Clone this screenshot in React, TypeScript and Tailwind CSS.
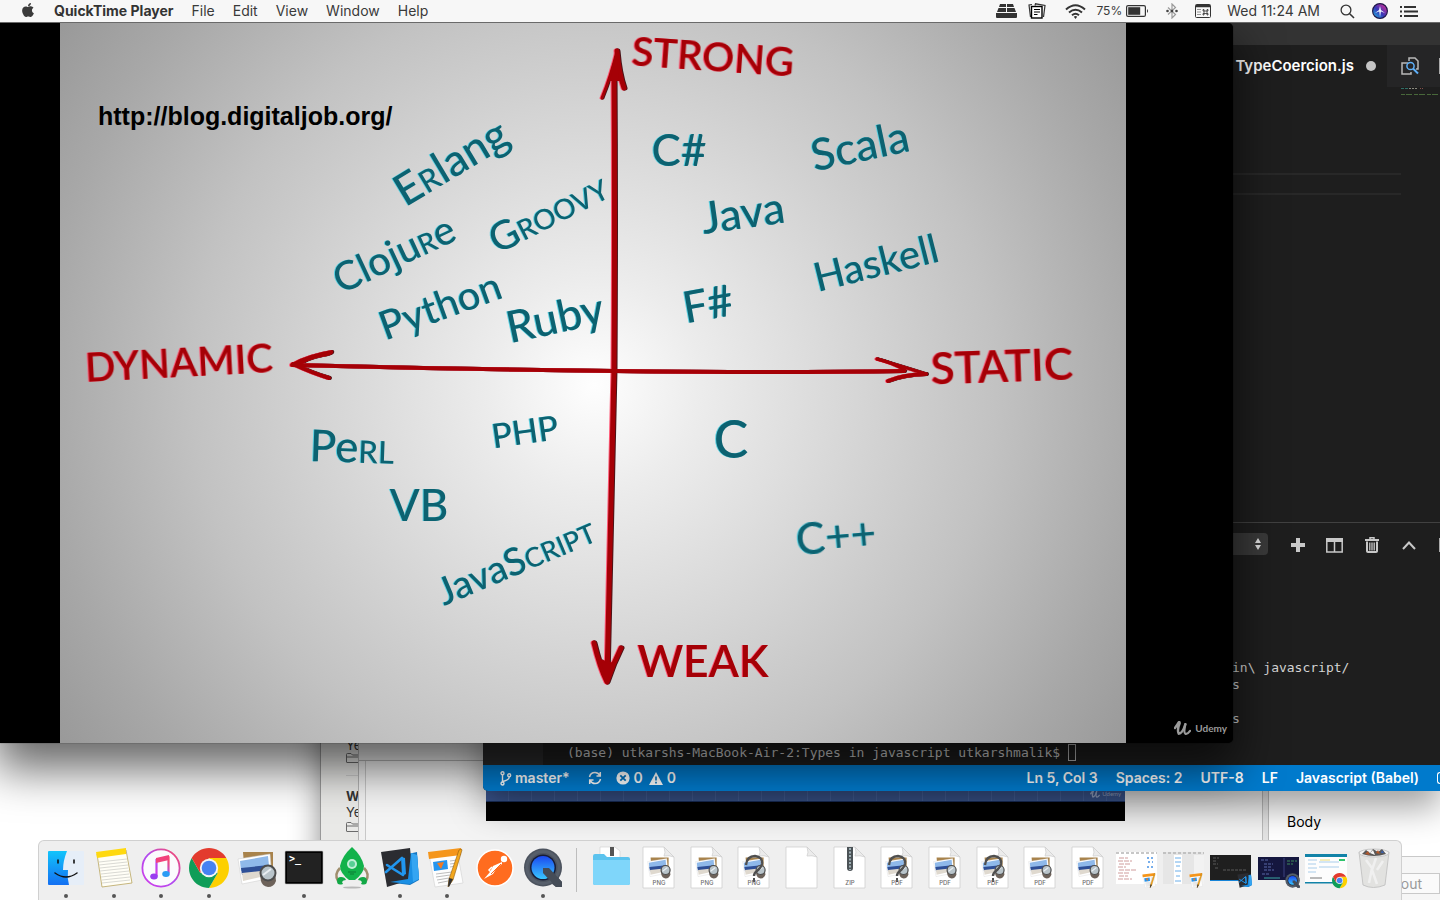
import type { ReactNode } from "react";
import { FaApple } from "react-icons/fa";

/* ---------- Whiteboard drawing ---------- */

type Word = {
  x: number;
  y: number;
  angle: number;
  size: string;
  parts: [string, boolean?][];
};

const languages: Word[] = [
  { x: 451, y: 162, angle: -31, size: "text-[44px]", parts: [["E"], ["r", true], ["lang"]] },
  { x: 394, y: 254, angle: -25, size: "text-[40px]", parts: [["Cloju"], ["r", true], ["e"]] },
  { x: 548, y: 213, angle: -27, size: "text-[40px]", parts: [["Groovy", true]] },
  { x: 440, y: 306, angle: -20, size: "text-[40px]", parts: [["Python"]] },
  { x: 555, y: 318, angle: -12, size: "text-[44px]", parts: [["Ruby"]] },
  { x: 679, y: 151, angle: 0, size: "text-[44px]", parts: [["C#"]] },
  { x: 743, y: 213, angle: -8, size: "text-[44px]", parts: [["Java"]] },
  { x: 860, y: 146, angle: -12, size: "text-[44px]", parts: [["Scala"]] },
  { x: 708, y: 304, angle: -10, size: "text-[44px]", parts: [["F#"]] },
  { x: 876, y: 263, angle: -14, size: "text-[40px]", parts: [["Haskell"]] },
  { x: 352, y: 447, angle: 2, size: "text-[44px]", parts: [["Pe"], ["rl", true]] },
  { x: 525, y: 432, angle: -8, size: "text-[34px]", parts: [["PHP"]] },
  { x: 419, y: 506, angle: 0, size: "text-[44px]", parts: [["VB"]] },
  { x: 516, y: 561, angle: -23, size: "text-[38px]", parts: [["JavaS"], ["cript", true]] },
  { x: 731, y: 440, angle: 0, size: "text-[52px]", parts: [["C"]] },
  { x: 836, y: 537, angle: -5, size: "text-[44px]", parts: [["C++"]] },
];

const axes: Word[] = [
  { x: 713, y: 57, angle: 4, size: "text-[40px]", parts: [["STRONG"]] },
  { x: 179, y: 363, angle: -3, size: "text-[40px]", parts: [["DYNAMIC"]] },
  { x: 1002, y: 367, angle: -2, size: "text-[44px]", parts: [["STATIC"]] },
  { x: 703, y: 662, angle: 0, size: "text-[44px]", parts: [["WEAK"]] },
];

function Lettering({ word }: { word: Word }) {
  return (
    <text
      transform={`translate(${word.x} ${word.y}) rotate(${word.angle})`}
      textAnchor="middle"
      dy="0.35em"
      className={word.size}
    >
      {word.parts.map(([t, caps], i) => (
        <tspan key={i} className={caps ? "[font-variant:small-caps]" : undefined}>
          {t}
        </tspan>
      ))}
    </text>
  );
}

function Whiteboard() {
  return (
    <svg viewBox="60 23 1066 720" className="block w-full" role="img" aria-label="Typing of programming languages">
      <defs>
        <radialGradient id="board" gradientUnits="userSpaceOnUse" cx="594" cy="385" r="670">
          <stop offset="0" stopColor="#fefefe" />
          <stop offset="0.16" stopColor="#ececec" />
          <stop offset="0.35" stopColor="#dadada" />
          <stop offset="0.6" stopColor="#c2c2c2" />
          <stop offset="0.82" stopColor="#a8a8a8" />
          <stop offset="1" stopColor="#959595" />
        </radialGradient>
      </defs>
      <rect x="60" y="23" width="1066" height="720" fill="url(#board)" />
      <a href="http://blog.digitaljob.org/">
        <text x="98" y="125" className="fill-black font-['Liberation_Sans',sans-serif] text-[25px] font-bold">
          http://blog.digitaljob.org/
        </text>
      </a>
      <g
        fill="none"
        stroke="#a50006"
        strokeLinecap="round"
        strokeLinejoin="round"
        className="[filter:drop-shadow(-1px_0_0_#ff5a78)_drop-shadow(1px_0_0_#4a1418)]"
      >
        <path d="M614 70 Q615 220 614 370 Q611 520 607 680" strokeWidth="5" />
        <path d="M602 98 Q611 76 617 51" strokeWidth="3" />
        <path d="M617 51 Q619 74 624 88" strokeWidth="5" />
        <path d="M609 80 L617 52 L620 80Z" fill="#a50006" strokeWidth="2" />
        <path d="M594 643 Q600 668 607 682 Q613 664 621 648" strokeWidth="5" />
        <path d="M599 660 L607 683 L614 664Z" fill="#a50006" strokeWidth="2" />
        <path d="M292 365 Q450 369 614 371 Q780 373 904 371" strokeWidth="4" />
        <path d="M292 364 Q308 355 332 351 Q334 354 322 356 Q306 359 298 366 Z" fill="#a50006" strokeWidth="2" />
        <path d="M293 364 Q312 373 329 378" strokeWidth="4" />
        <path d="M877 359 Q890 362 905 370" strokeWidth="3" />
        <path d="M877 359 Q904 367 926 374" strokeWidth="3" />
        <path d="M888 381 Q902 375 926 374" strokeWidth="4" />
      </g>
      <g className="fill-[#a50006] font-['Lato',sans-serif] font-semibold [filter:drop-shadow(-1px_0_0_#ff5a78)]">
        {axes.map((w, i) => (
          <Lettering key={i} word={w} />
        ))}
      </g>
      <g className="fill-[#0c6271] font-['Lato',sans-serif] font-medium [filter:drop-shadow(-1px_0_0_#5fd2e2)]">
        {languages.map((w, i) => (
          <Lettering key={i} word={w} />
        ))}
      </g>
    </svg>
  );
}

function UdemyMark({ className }: { className: string }) {
  return (
    <svg viewBox="0 0 18 15" className={className} fill="none" stroke="currentColor" strokeLinecap="round" strokeLinejoin="round">
      <path d="M1 7 Q4 3 5 1 Q6 0 6 2 Q3 9 5 13 Q9 13 12 3" strokeWidth="2.6" />
      <path d="M12 3 Q10 12 12 13 Q14 14 17 10" strokeWidth="2.4" />
    </svg>
  );
}

/* ---------- Menu bar ---------- */

function MenuBar() {
  return (
    <header className="relative z-50 flex h-[23px] shrink-0 items-center border-b border-[#6a6a6a] bg-[#f7f7f7] font-['Inter',sans-serif] text-sm leading-none text-[#3a3a3a]">
      <nav className="flex h-full items-center gap-[18px]">
        <button aria-label="Apple" className="ml-5">
          <FaApple className="h-4 w-4 -translate-y-px" />
        </button>
        <button className="font-bold text-[#333]">QuickTime Player</button>
        <button>File</button>
        <button>Edit</button>
        <button>View</button>
        <button>Window</button>
        <button>Help</button>
      </nav>
      <div className="ml-auto flex h-full items-center pr-[22px]">
        <svg viewBox="0 0 21 14" className="h-[14px] w-[21px]" fill="#333" aria-label="Stacks">
          <path d="M4 0h6v3H3zM11 0h6l1 3h-7zM2.500 4H10v4H1zM11 4h7.500L20 8h-9zM0 9h21v4q0 1-1 1H1q-1 0-1-1z" />
        </svg>
        <svg viewBox="0 0 18 16" className="ml-[11px] h-4 w-[18px]" fill="none" aria-label="Clipboard">
          <path d="M2.500 14 L1 2 L4 1.500M7 2.500 7.500 .8 17 2.500 15.500 14" stroke="#333" strokeWidth="1.200" />
          <rect x="3.500" y="3.500" width="10.500" height="11.500" fill="#fff" stroke="#000" strokeWidth="1.400" />
          <path d="M6 6.500h6M6 9h6M6 11.500h3.500" stroke="#000" strokeWidth="1.200" />
        </svg>
        <svg viewBox="0 0 21 15" className="ml-[19px] h-[15px] w-[21px]" fill="none" stroke="#333" strokeWidth="2" aria-label="Wi-Fi">
          <path d="M1 5.500Q10.500-3 20 5.500M4 8.500q6.500-5.500 13 0M7 11.300q3.500-3 7 0" />
          <path d="M8.800 12.800q1.700-1.400 3.400 0L10.500 15z" fill="#333" stroke="none" />
        </svg>
        <span className="ml-2.5 text-xs">75%</span>
        <svg viewBox="0 0 23 12" className="ml-1 h-3 w-[23px]" aria-label="Battery">
          <rect x=".6" y=".6" width="18.800" height="10.800" rx="1.500" fill="none" stroke="#333" strokeWidth="1.200" />
          <rect x="2.200" y="2.200" width="12" height="7.600" fill="#333" />
          <path d="M21 4q2 2 0 4z" fill="#333" />
        </svg>
        <svg viewBox="0 0 12 16" className="ml-[17px] h-4 w-3" fill="none" stroke="#9a9a9a" strokeWidth="1.200" aria-label="Bluetooth">
          <path d="M2 4.500 9.500 11.500 6 15V1l3.500 3.500L2 11.500" />
          <g fill="#444" stroke="none">
            <circle cx="1.500" cy="8" r="1.300" />
            <circle cx="6" cy="8" r="1.300" />
            <circle cx="10.500" cy="8" r="1.300" />
          </g>
        </svg>
        <svg viewBox="0 0 16 14" className="ml-[17px] h-[14px] w-4" fill="none" stroke="#333" aria-label="Input">
          <rect x=".5" y=".5" width="15" height="13" rx="1" />
          <path d="M1 2h14" strokeWidth="2.500" />
          <path d="M2.500 5.500h4M2.500 8h4M2.500 10.500h4" strokeDasharray="1 1" strokeWidth="1" />
          <path d="M9 7V5.500h-1V7h5V5.500h-1V11h1V9.500H8V11h1z" strokeWidth=".8" />
        </svg>
        <span className="ml-4">Wed 11:24 AM</span>
        <button aria-label="Search" className="ml-5">
          <svg viewBox="0 0 15 15" className="h-[15px] w-[15px]" fill="none" stroke="#333" strokeWidth="1.300">
            <circle cx="6" cy="6" r="4.900" />
            <path d="M9.700 9.700 14 14" strokeWidth="1.600" />
          </svg>
        </button>
        <button aria-label="Siri" className="ml-[17px]">
          <svg viewBox="0 0 16 16" className="h-4 w-4">
            <defs>
              <linearGradient id="siri" x1="0" y1="1" x2="1" y2="0">
                <stop offset="0" stopColor="#1ec8e8" />
                <stop offset=".45" stopColor="#3538b8" />
                <stop offset="1" stopColor="#f02a90" />
              </linearGradient>
            </defs>
            <circle cx="8" cy="8" r="7.400" fill="url(#siri)" stroke="#20184a" strokeWidth="1.200" />
            <path d="M8 3l1 4 4 3-4-1.500L8 14 7.200 8.500 3 10l4-3z" fill="#e8f4ff" />
          </svg>
        </button>
        <button aria-label="Notification Center" className="ml-3">
          <svg viewBox="0 0 18 11" className="h-[11px] w-[18px]" fill="#333">
            <path d="M0 0h2v2H0zM0 4.500h2v2H0zM0 9h2v2H0zM4 0h12v2H4zM4 4.500h14v2H4zM4 9h14v2H4z" />
          </svg>
        </button>
      </div>
    </header>
  );
}

/* ---------- Windows ---------- */

function FolderOutline() {
  return (
    <svg viewBox="0 0 14 10" className="h-2.5 w-3.5 shrink-0" fill="none" stroke="#6b6b6b">
      <path d="M.5 9V1.500q0-1 1-1H5l1.500 1.500H13q.5 0 .5 1V9q0 .5-.5.5H1Q.5 9.500.5 9zM.5 4h13" />
    </svg>
  );
}

function NotesWindow() {
  return (
    <section
      aria-label="Notes"
      className="absolute bottom-0 left-[320px] top-[677px] flex w-[60px] flex-col border-l border-[#999] bg-[#e9e9e7] pl-[25px] pt-[37px] font-['Inter',sans-serif] text-[13px] leading-4 text-[#333] shadow-[0_10px_30px_rgba(0,0,0,0.45)]"
    >
      <p>Ye</p>
      <FolderOutline />
      <hr className="mt-3 border-[#cfcfcf]" />
      <p className="mt-3 font-bold">W</p>
      <p>Ye</p>
      <div className="mt-0.5">
        <FolderOutline />
      </div>
    </section>
  );
}

function PagesWindow() {
  return (
    <section aria-label="Pages" className="absolute bottom-0 left-[358px] right-0 top-[677px] flex flex-col border-l border-[#b5b5b5] bg-[#f4f4f4]">
      <div className="h-[61px] shrink-0 border-b border-[#b8b8b8] bg-[#ececec]" />
      <div className="flex flex-1">
        <div className="w-[7px] border-r border-[#c8c8c8] bg-[#f1f1f1]" />
        <figure className="ml-[120px] flex w-[639px] flex-col self-start">
          <div className="flex h-10 items-end justify-end gap-0.5 bg-[#3d5a96] bg-[repeating-linear-gradient(90deg,transparent_0_22px,#4a67a3_22px_23px)] pb-[3px] pr-1 font-['Lato',sans-serif] text-[6px] leading-[8px] text-[#9fb0d3]">
            <UdemyMark className="h-2 w-2.5" />
            Udemy
          </div>
          <div className="h-5 border-t border-[#1b3160] bg-black" />
        </figure>
        <div className="ml-auto w-[7px] border-x border-[#bbb] bg-[#e4e4e4]" />
        <aside className="flex w-[171px] flex-col bg-white font-['Inter',sans-serif] text-sm text-black">
          <p className="border-b border-[#c9c9c9] pb-6 pl-[18px] pt-[51px] leading-5">Body</p>
          <div className="flex flex-1 items-start justify-end bg-[#f6f6f6] pt-4">
            <button className="flex h-[21px] w-[100px] items-center justify-end border border-[#c9c9c9] bg-[#fafafa] pr-[17px] text-sm text-[#999]">
              Layout
            </button>
          </div>
        </aside>
      </div>
    </section>
  );
}

function TerminalHeader() {
  return (
    <div className="flex h-[44px] items-center justify-end text-[#c8c8c8]">
      <div className="relative">
        <select aria-label="Terminal" className="h-[22px] w-[60px] appearance-none rounded-[4px] bg-[#3a3a3a]">
          <option value="" aria-label="bash" />
        </select>
        <svg viewBox="0 0 6 12" className="pointer-events-none absolute right-[7px] top-[5px] h-3 w-1.5" fill="#ddd">
          <path d="M3 0 6 5H0zM0 7h6L3 12z" />
        </svg>
      </div>
      <button aria-label="New terminal" className="ml-[23px]">
        <svg viewBox="0 0 14 14" className="h-3.5 w-3.5" fill="currentColor">
          <path d="M5 0h4v5h5v4H9v5H5V9H0V5h5z" />
        </svg>
      </button>
      <button aria-label="Split terminal" className="ml-[21px]">
        <svg viewBox="0 0 17 15" className="h-[15px] w-[17px]" fill="none" stroke="currentColor">
          <path d="M.8 3v11h15.400V3M8.500 3v11" strokeWidth="1.500" />
          <path d="M0 2h17" strokeWidth="4" />
        </svg>
      </button>
      <button aria-label="Kill terminal" className="ml-[22px]">
        <svg viewBox="0 0 14 16" className="h-4 w-3.5" fill="none" stroke="currentColor">
          <path d="M0 3h14" strokeWidth="2" />
          <path d="M5 2V.8h4V2" strokeWidth="1.500" />
          <path d="M2 4.500v9.700q0 .8 1 .8h8q1 0 1-.8V4.500" strokeWidth="2" />
          <path d="M4.800 5.500v8M7 5.500v8M9.200 5.500v8" strokeWidth="1.300" />
        </svg>
      </button>
      <button aria-label="Maximize panel" className="ml-[23px] mr-[23px]">
        <svg viewBox="0 0 14 9" className="h-[9px] w-3.5" fill="none" stroke="currentColor" strokeWidth="2">
          <path d="M1 8 7 1.500 13 8" />
        </svg>
      </button>
      <span className="h-3.5 w-px bg-[#aaa]" />
    </div>
  );
}

function StatusBar() {
  return (
    <footer className="flex h-[26px] shrink-0 items-center bg-[#007acc] font-['Inter',sans-serif] text-sm font-semibold leading-none text-white">
      <svg viewBox="0 0 12 15" className="ml-[17px] h-[15px] w-3" fill="none" stroke="currentColor" strokeWidth="1.400">
        <circle cx="2.500" cy="2.300" r="1.500" />
        <circle cx="2.500" cy="12.500" r="1.500" />
        <circle cx="9.200" cy="4.300" r="1.500" />
        <path d="M2.500 4v7M9.200 6q0 3-6.500 4.500" />
      </svg>
      <span className="ml-[3px]">master*</span>
      <svg viewBox="0 0 14 14" className="ml-[18px] h-3.5 w-3.5" fill="none" stroke="currentColor" strokeWidth="1.500">
        <path d="M1.500 6Q2.500 1.500 7 1.500q3 0 5 3M12.500 8Q11.500 12.500 7 12.500q-3 0-5-3M12.300 1v4H8.500M1.700 13V9h3.800" />
      </svg>
      <svg viewBox="0 0 14 14" className="ml-3.5 h-3.5 w-3.5">
        <circle cx="7" cy="7" r="6.600" fill="#fff" />
        <path d="m4.300 4.300 5.400 5.400m0-5.400L4.300 9.700" stroke="#0071bd" strokeWidth="1.800" />
      </svg>
      <span className="ml-1">0</span>
      <svg viewBox="0 0 14 13" className="ml-1.5 h-[13px] w-3.5">
        <path d="M7 0 14 13H0z" fill="#fff" />
        <path d="M7 4.500v4M7 9.800v1.600" stroke="#0071bd" strokeWidth="1.600" />
      </svg>
      <span className="ml-1">0</span>
      <div className="ml-auto flex items-center gap-[18px]">
        <span>Ln 5, Col 3</span>
        <span>Spaces: 2</span>
        <span>UTF-8</span>
        <span>LF</span>
        <span>Javascript (Babel)</span>
        <span className="h-3 w-[3px] rounded-l-full border border-r-0 border-white" />
      </div>
    </footer>
  );
}

function CodeWindow() {
  return (
    <section
      aria-label="Visual Studio Code"
      className="absolute left-[483px] right-0 top-0 flex h-[768px] flex-col overflow-hidden rounded-bl-[5px] bg-[#1e1e1e] shadow-[0_16px_34px_rgba(0,0,0,0.38)]"
    >
      <div className="h-[22px] shrink-0 bg-[#333]" />
      <div className="flex h-[42px] shrink-0 justify-end bg-[#252526] font-['Inter',sans-serif]">
        <div className="flex flex-1 items-center justify-end gap-3 bg-[#1e1e1e] pr-[11px] text-[15px] font-semibold text-white">
          TypeCoercion.js
          <span className="h-2.5 w-2.5 rounded-full bg-[#c5c5c5]" />
        </div>
        <div className="flex w-[53px] items-center justify-between pl-3.5">
          <svg viewBox="0 0 18 18" className="h-[18px] w-[18px]" fill="none" strokeWidth="1.500">
            <path d="M7 6H1v11h9v-2M8 4V1h6l3 3v8h-2" stroke="#b8b8b8" />
            <circle cx="9.500" cy="9" r="3.600" stroke="#5fb0f8" />
            <path d="m12 11.500 5 5" stroke="#5fb0f8" strokeWidth="2" />
          </svg>
          <span className="h-4 w-px bg-[#aaa]" />
        </div>
      </div>
      <div className="flex flex-1">
        <div className="w-[60px] bg-[#2a2a2b]" />
        <div className="flex flex-1 flex-col">
          <div className="flex h-[436px] border-b border-[#414141]">
            <div className="flex-1 pt-[86px]">
              <div className="h-[22px] border-y-2 border-[#282828]" />
            </div>
            <svg viewBox="0 0 39 10" className="h-2.5 w-[39px]" strokeWidth="1">
              <path d="M0 1.500h7" stroke="#2f6f66" strokeDasharray="3 1" />
              <path d="M8 1.500h9" stroke="#8a8a80" strokeDasharray="2 1" />
              <path d="M19 1.500h3" stroke="#84504a" strokeDasharray="1 1" />
              <path d="M0 7.500h39" stroke="#48683a" strokeDasharray="4 1 6 2" />
            </svg>
          </div>
          <TerminalHeader />
          <div className="flex flex-1 flex-col justify-end pb-1 font-['DejaVu_Sans_Mono',monospace] text-[13px] leading-[17px] text-[#d4d4d4]">
            <div className="w-[208px] self-end">
              <p>in\ javascript/</p>
              <p>s</p>
              <p className="mt-[17px]">s</p>
            </div>
            <p className="mt-[17px] flex items-center pl-6">
              (base) utkarshs-MacBook-Air-2:Types in javascript utkarshmalik$
              <span className="ml-2 h-[17px] w-2 border border-[#bbb]" />
            </p>
          </div>
        </div>
      </div>
      <StatusBar />
    </section>
  );
}

function PlayerWindow() {
  return (
    <section
      aria-label="QuickTime Player"
      className="absolute left-0 top-0 flex w-[1233px] items-end overflow-visible rounded-r-[5px] bg-black pl-[60px] shadow-[0_0_1px_#000,0_22px_46px_4px_rgba(0,0,0,0.6)]"
    >
      <div className="min-w-0 flex-1">
        <Whiteboard />
      </div>
      <div className="flex w-[107px] items-center justify-end gap-1 pb-[7px] pr-1.5 font-['Lato',sans-serif] text-[10px] font-bold leading-[15px] text-[#9a9a9a]">
        <UdemyMark className="h-[15px] w-[17px]" />
        Udemy
      </div>
    </section>
  );
}

/* ---------- Dock icons ---------- */

function Icon({ children, label }: { children: ReactNode; label: string }) {
  return (
    <svg viewBox="0 0 40 40" className="h-10 w-10 overflow-visible" role="img" aria-label={label}>
      {children}
    </svg>
  );
}

function ChromeArt() {
  return (
    <g>
      <path d="M37.300 10A20 20 0 0 1 20 40L28.700 25 20 10z" fill="#fdd000" />
      <path d="M2.700 10A20 20 0 0 0 20 40L28.700 25 20 20 11.300 25z" fill="#0f9d58" />
      <path d="M2.700 10A20 20 0 0 1 37.300 10H20L11.300 25z" fill="#e33b2e" />
      <circle cx="20" cy="20" r="9.200" fill="#f4f4f4" />
      <circle cx="20" cy="20" r="7.300" fill="#4682f2" />
    </g>
  );
}

function QuickTimeArt() {
  return (
    <g>
      <circle cx="20" cy="19.500" r="19" fill="#4c535e" />
      <path d="M22 24h8l9 10v5h-6L20 29z" fill="#4c535e" />
      <circle cx="20" cy="19.500" r="16" fill="none" stroke="#626b77" strokeWidth="3" opacity=".5" />
      <circle cx="20" cy="19.500" r="13" fill="#171c38" />
      <circle cx="20" cy="19.500" r="11.500" fill="url(#qt)" />
      <path d="M20 20h6l13 14v5h-6L20 25z" fill="#454c57" />
    </g>
  );
}

function CodeArt() {
  return (
    <g>
      <path d="m28 6 9-2 2 28-9 5-16-2z" fill="#1677c2" />
      <path d="M1 4 30 0 33 31 7 39z" fill="#2b2c31" />
      <path d="m6 24 16-14M7 17l16 10" fill="none" stroke="#2196ee" strokeWidth="2.600" strokeLinecap="round" />
      <path d="m21 9 4 1 1 16-4 2z" fill="#2196ee" />
      <path d="m10 34 18-3 3-26 6 2 2 24-9 5z" fill="#1a8fe4" />
      <path d="m31 5 6 2 2 24-6 3z" fill="#35a5f2" />
    </g>
  );
}

function PagesArt() {
  return (
    <g>
      <path d="M2 6 30 2 36 35 8 39z" fill="#fdfdfd" stroke="#d0d0d0" strokeWidth=".6" />
      <path d="M1 4 34 0 34 7 2 11z" fill="#f5961c" />
      <path d="m6 14 14-2 1 9-14 2z" fill="#2595ee" />
      <path d="m10 15 7-1-3 7z" fill="#f47a20" />
      <path d="m23 13 7-1m-7 4 7-1m-7 4 6-1M9 26l16-2M9 29l14-2M10 32l12-2M11 35l10-2" stroke="#bdbdbd" strokeWidth="1" />
      <path d="M32 2q3-2 3 0L26 32l-5 7 1-8z" fill="#f3a71d" stroke="#8d5b12" strokeWidth=".6" />
      <path d="m22 30 4 1-4 8-1-1z" fill="#333" />
    </g>
  );
}

function PhotoArt() {
  return (
    <g>
      <path d="M6 4h30v25L8 31z" fill="#a8834c" />
      <path d="m1 11 32-5 2 24L5 36z" fill="#fff" stroke="#ccc" strokeWidth=".5" />
      <path d="m3 13 28-5 1 10L4 23z" fill="#8fb9ea" />
      <path d="m4 20 28-3v6L5 27z" fill="#2e4f96" />
      <path d="m5 25 27-3v5L6 33z" fill="#dfd9cf" />
      <path d="m23 27 15-3 1 9q-2 6-8 6-6-1-7-6z" fill="#6d625a" />
      <circle cx="31" cy="25" r="7.500" fill="#b9c4ca" stroke="#4c4c4c" strokeWidth="2" />
      <path d="m26 27 8-6" stroke="#e9eef2" strokeWidth="2" />
    </g>
  );
}

function Finder() {
  return (
    <Icon label="Finder">
      <rect x="2" y="3" width="36" height="34" rx="1" fill="#e6eef8" />
      <path d="M2 4q0-1 1-1h18Q17 13 17 22h5q-1 8 1 15H3q-1 0-1-1z" fill="url(#finder)" />
      <path d="M12 12v3M28 12v3" stroke="#111" strokeWidth="1.600" strokeLinecap="round" />
      <path d="M9 25q11 8 22 0" fill="none" stroke="#111" strokeWidth="1.500" strokeLinecap="round" />
    </Icon>
  );
}

function NotesIcon() {
  return (
    <Icon label="Notes">
      <path d="M3 6 32 2 38 35 8 39z" fill="#fffef6" stroke="#b9a45e" strokeWidth=".8" />
      <path d="M2 4 32 0v6L3 10z" fill="#ffd90f" />
      <path d="m5 14 28-3M5 17l28-3M6 20l28-3M6 23l28-3M7 26l28-3M7 29l28-3M8 32l28-3M8 35l28-3" stroke="#d5d5cf" strokeWidth=".9" />
    </Icon>
  );
}

function Music() {
  return (
    <Icon label="iTunes">
      <circle cx="20" cy="20" r="18.600" fill="#fbfbfd" stroke="url(#itunes)" strokeWidth="1.800" />
      <path d="M15.500 28V12l12-2.500V25" fill="none" stroke="url(#itunes)" strokeWidth="2.200" />
      <path d="m15 10 13-3v5l-13 3z" fill="#f2427c" />
      <ellipse cx="13" cy="28.500" rx="3.800" ry="3" fill="#9a3df0" />
      <ellipse cx="25" cy="26" rx="3.800" ry="3" fill="#2b9bf4" />
    </Icon>
  );
}

function TerminalIcon() {
  return (
    <Icon label="Terminal">
      <rect x="1" y="3" width="38" height="33" rx="1" fill="#000" stroke="#bbb" strokeWidth=".6" />
      <rect x="3" y="5" width="34" height="29" fill="#222" />
      <text x="5" y="14" className="fill-white font-['DejaVu_Sans_Mono',monospace] text-[10px] font-bold">
        &gt;_
      </text>
    </Icon>
  );
}

function Rocket() {
  return (
    <Icon label="Robo 3T">
      <ellipse cx="20" cy="39.500" rx="9" ry="1" fill="#b9b9b9" />
      <path d="M8 20q-6 6-2 13M32 20q6 6 2 13" fill="none" stroke="#a08f6e" strokeWidth="2.500" />
      <path d="M20-1Q30 8 32 18q0 7-9 14h-6Q8 25 8 18 10 8 20-1z" fill="#12b24b" />
      <path d="M5 33q0-4 4-4 4 0 5 3-3 0-4 2l1 2q-6 2-6-3zM35 33q0-4-4-4-4 0-5 3 3 0 4 2l-1 2q6 2 6-3z" fill="#12a846" />
      <circle cx="20" cy="16" r="5" fill="#bff0d6" />
      <circle cx="20" cy="16" r="3" fill="#57cf94" />
      <path d="M16 24h8m-6 2h4" stroke="#0a7d35" strokeWidth="1.200" />
    </Icon>
  );
}

function Postman() {
  return (
    <Icon label="Postman">
      <circle cx="20" cy="20" r="18" fill="#ff6c1f" stroke="#fff" strokeWidth="1.500" />
      <circle cx="29" cy="11" r="3.200" fill="#fff" />
      <path d="m27 14-9 4-3 6-6 7 9-5 3-5 6-5z" fill="#fff" />
      <path d="M26 16 16 26" stroke="#ff6c1f" />
      <path d="m17 19-3 3 2 2" fill="none" stroke="#fff" strokeWidth="1.500" />
    </Icon>
  );
}

function Folder() {
  return (
    <Icon label="Downloads">
      <path d="M9 10V-1h15l5 4v8z" fill="#fff" stroke="#ccc" strokeWidth=".6" />
      <path d="M19-1h4v9h-4z" fill="#555" />
      <path d="M2 8q0-2 2-2h9l3 3h21q2 0 2 2v24q0 2-2 2H4q-2 0-2-2z" fill="#5cc3ee" />
      <path d="M2 12h37v23q0 2-2 2H4q-2 0-2-2z" fill="#7fd6fa" />
    </Icon>
  );
}

function FileIcon({ kind, query, photo }: { kind: string; query?: boolean; photo?: boolean }) {
  return (
    <Icon label={kind === "" ? "Document" : `${kind} file`}>
      <path d="M4-1h21l10 10v31H4z" fill="#fff" stroke="#cfcfcf" strokeWidth=".8" />
      <path d="M25-1q2 6 0 9 5-1 10 1z" fill="#ececec" stroke="#cfcfcf" strokeWidth=".8" />
      {photo && (
        <g transform="translate(8 7) scale(.6)">
          <PhotoArt />
        </g>
      )}
      {kind === "ZIP" && (
        <g>
          <path d="M17-1h6v21q0 3-3 3t-3-3z" fill="#4c5357" />
          <path d="M20 0v22" stroke="#9fb0b5" strokeWidth="2" strokeDasharray="2 1.500" />
        </g>
      )}
      {query && (
        <g>
          <path d="M12 17q1-9 9-9 8 1 7 8-1 4-5 7-3 2-3 5" fill="none" stroke="#4f4f4f" strokeWidth="2.400" />
          <path d="M19 30h2v4h-2z" fill="#4f4f4f" />
        </g>
      )}
      {kind !== "" && (
        <text x="20" y="37" textAnchor="middle" className="fill-[#6f6f6f] font-['Inter',sans-serif] text-[6px] font-medium">
          {kind}
        </text>
      )}
    </Icon>
  );
}

function Thumbnail({ label, children, badge }: { label: string; children: ReactNode; badge: ReactNode }) {
  return (
    <Icon label={label}>
      {children}
      <g transform="translate(26 25) scale(.38)">{badge}</g>
    </Icon>
  );
}

function Trash() {
  return (
    <Icon label="Trash">
      <path d="m5 4 4 33q10 5 22 0l4-33q-15-5-30 0z" fill="#e2e2e0" stroke="#bcbcbc" strokeWidth=".8" />
      <ellipse cx="20" cy="5" rx="15" ry="4" fill="#f2f2f2" stroke="#c8c8c8" />
      <path d="m8 6 4-4 4 3 3-4 5 3 4-3 4 5q-12 4-24 0z" fill="#5a5857" />
      <path d="m11 6 3-3 2 4zM22 5l2-3 2 4z" fill="#b2582c" />
      <path d="m16 5 3-3 2 5z" fill="#f5f5f5" />
      <path d="m27 5 1-3 2 3z" fill="#3a62b0" />
      <path d="m12 12 6 8-3 15M22 10l-4 12 5 14M29 13l-6 9" fill="none" stroke="#f6f6f6" strokeWidth="2.500" opacity=".7" />
    </Icon>
  );
}

const apps: { icon: ReactNode; running: boolean }[] = [
  { icon: <Finder />, running: true },
  { icon: <NotesIcon />, running: true },
  { icon: <Music />, running: true },
  { icon: <Icon label="Chrome"><ChromeArt /></Icon>, running: true },
  { icon: <Icon label="Preview"><PhotoArt /></Icon>, running: false },
  { icon: <TerminalIcon />, running: true },
  { icon: <Rocket />, running: false },
  { icon: <Icon label="Visual Studio Code"><CodeArt /></Icon>, running: true },
  { icon: <Icon label="Pages"><PagesArt /></Icon>, running: true },
  { icon: <Postman />, running: false },
  { icon: <Icon label="QuickTime Player"><QuickTimeArt /></Icon>, running: true },
];

const files: ReactNode[] = [
  <Folder />,
  <FileIcon kind="PNG" photo />,
  <FileIcon kind="PNG" photo />,
  <FileIcon kind="PNG" photo query />,
  <FileIcon kind="" />,
  <FileIcon kind="ZIP" />,
  <FileIcon kind="PDF" photo query />,
  <FileIcon kind="PDF" photo />,
  <FileIcon kind="PDF" photo query />,
  <FileIcon kind="PDF" photo />,
  <FileIcon kind="PDF" photo />,
  <Thumbnail label="Pages document" badge={<PagesArt />}>
    <path d="M0 4h41v32H0z" fill="#fff" />
    <path d="M0 5h41" stroke="#b5b5b5" strokeWidth="1.500" strokeDasharray="3 2" />
    <path d="M3 10h9M2 13h14M3 16h12M2 19h8M3 22h18M2 25h12M3 28h9M2 31h14" stroke="#cf9c9c" strokeWidth="1" strokeDasharray="5 1" />
    <path d="M31 10h8M32 14h5M31 19h8" stroke="#4a94e6" strokeWidth="1.500" strokeDasharray="2 2" />
  </Thumbnail>,
  <Thumbnail label="Pages template" badge={<PagesArt />}>
    <path d="M0 4h41v32H0z" fill="#e6e6e6" />
    <path d="M0 5h41" stroke="#b5b5b5" strokeWidth="1.500" strokeDasharray="3 2" />
    <path d="M11 7h8v29h-8z" fill="#fff" />
    <path d="M12 10h6M12 14h6M13 18h4M12 23h6M13 28h4M12 33h6" stroke="#6aaeea" strokeWidth="1" />
    <path d="M31 7h10v29H31z" fill="#f2f2f2" />
  </Thumbnail>,
  <Thumbnail label="Code window" badge={<CodeArt />}>
    <path d="M-1 7h41v26H-1z" fill="#1f1f1f" />
    <path d="M-1 32h41v1H-1z" fill="#1684d8" />
    <path d="M2 10h6M2 13h4M2 16h5M4 20h3M12 22h24" stroke="#5a5a5a" strokeWidth="1" strokeDasharray="3 1" />
  </Thumbnail>,
  <Thumbnail label="Movie window" badge={<QuickTimeArt />}>
    <path d="M-1 9h41v23H-1z" fill="#15173f" />
    <path d="M2 12h8M5 16h9M5 19h7M5 22h10M3 26h8" stroke="#5a69a8" strokeWidth="1" strokeDasharray="3 1" />
    <path d="M25 10v19" stroke="#3c4380" />
    <path d="M5 30h16" stroke="#3aa7a0" />
    <path d="M28 13h10M28 16h6" stroke="#3f8a5c" strokeDasharray="3 1" />
  </Thumbnail>,
  <Thumbnail label="Browser window" badge={<ChromeArt />}>
    <path d="M-1 6h42v29H-1z" fill="#fdfdfd" />
    <path d="M-1 6h42v3H-1zM-1 34h28v1.500H-1z" fill="#1283a8" />
    <path d="M2 12h9M2 16h8M2 20h9M2 24h8M13 14h20M13 19h20" stroke="#a9cdea" strokeWidth="1" />
    <path d="M14 12h10" stroke="#e9dc7a" />
    <path d="M33 12h6" stroke="#2fc46c" strokeWidth="2" />
    <path d="M4 30h12" stroke="#777" />
  </Thumbnail>,
  <Trash />,
];

function Dock() {
  return (
    <footer
      aria-label="Dock"
      className="absolute inset-x-[38px] bottom-0 z-40 flex h-[60px] rounded-t-[6px] border border-b-0 border-[#d0d0d0] bg-[#efefef] px-[3px]"
    >
      {apps.map((app, i) => (
        <div key={i} className="flex flex-1 flex-col items-center pt-[7px]">
          {app.icon}
          {app.running && <span className="mt-[6px] h-1 w-1 rounded-full bg-[#555]" />}
        </div>
      ))}
      <div className="flex w-[21px] justify-center py-[7px]">
        <span className="h-[44px] w-px bg-[#bdbdbd]" />
      </div>
      {files.map((file, i) => (
        <div key={i} className="flex flex-1 flex-col items-center pt-[7px]">
          {file}
        </div>
      ))}
    </footer>
  );
}

export default function App() {
  return (
    <div className="flex h-screen flex-col overflow-hidden bg-white">
      <svg className="absolute h-0 w-0" aria-hidden="true">
        <defs>
          <linearGradient id="finder" x1="0" y1="0" x2="0" y2="1">
            <stop offset="0" stopColor="#12c4fb" />
            <stop offset="1" stopColor="#1470f2" />
          </linearGradient>
          <linearGradient id="itunes" x1="1" y1="0" x2="0" y2="1">
            <stop offset="0" stopColor="#ff4a5c" />
            <stop offset=".5" stopColor="#b04cf0" />
            <stop offset="1" stopColor="#d23be8" />
          </linearGradient>
          <linearGradient id="qt" x1="0" y1="0" x2="0" y2="1">
            <stop offset="0" stopColor="#1b49f0" />
            <stop offset="1" stopColor="#39c6ff" />
          </linearGradient>
        </defs>
      </svg>
      <MenuBar />
      <main className="relative flex-1">
        <NotesWindow />
        <PagesWindow />
        <CodeWindow />
        <PlayerWindow />
        <Dock />
      </main>
    </div>
  );
}
